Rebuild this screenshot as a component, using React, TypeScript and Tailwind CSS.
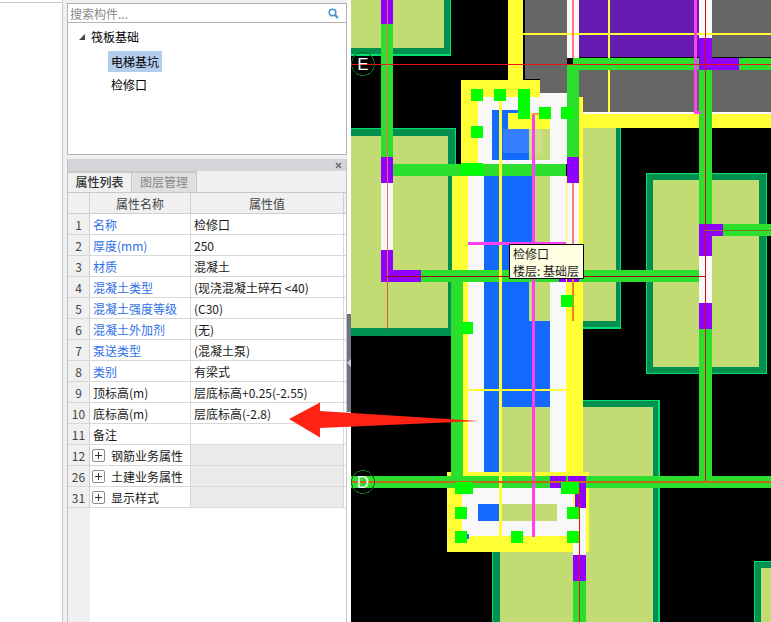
const rows = [
  { n: '1', name: '名称', value: '检修口', link: true },
  { n: '2', name: '厚度(mm)', value: '250', link: true },
  { n: '3', name: '材质', value: '混凝土', link: true },
  { n: '4', name: '混凝土类型', value: '(现浇混凝土碎石 <40)', link: true },
  { n: '5', name: '混凝土强度等级', value: '(C30)', link: true },
  { n: '6', name: '混凝土外加剂', value: '(无)', link: true },
  { n: '7', name: '泵送类型', value: '(混凝土泵)', link: true },
  { n: '8', name: '类别', value: '有梁式', link: true },
  { n: '9', name: '顶标高(m)', value: '层底标高+0.25(-2.55)', link: false },
  { n: '10', name: '底标高(m)', value: '层底标高(-2.8)', link: false },
  { n: '11', name: '备注', value: '', link: false },
];

const groups = [
  { n: '12', name: '钢筋业务属性' },
  { n: '26', name: '土建业务属性' },
  { n: '31', name: '显示样式' },
];

const KHAKI = '#c3db73';
const DARK = '#009050';
const EDGE = '#00e070';
const GREEN = '#2ddf2d';
const PURPLE = '#9000ff';
const YELLOW = '#ffff33';
const WHITE = '#f8f8f8';
const BLUE = '#1469ff';
const GRAY = '#666666';
const HANDLE = '#00ff00';
const RED = '#ee1111';
const PINK = '#ff40f0';

// x, y, w, h, fill
const shapes: [number, number, number, number, string][] = [
  // top left footing
  [351, 0, 100, 56, EDGE],
  [351, 0, 99, 54, DARK],
  [351, 0, 93, 48, KHAKI],
  // left footing
  [351, 128, 105, 208, EDGE],
  [351, 129, 104, 207, DARK],
  [351, 136, 97, 192, KHAKI],
  // right middle footing
  [583, 128, 38, 201, EDGE],
  [583, 128, 37, 199, DARK],
  [583, 128, 33, 193, KHAKI],
  // far right footing
  [646, 173, 121, 201, EDGE],
  [647, 174, 119, 199, DARK],
  [653, 180, 106, 187, KHAKI],
  // bottom footing
  [492, 400, 168, 222, EDGE],
  [493, 401, 165, 221, DARK],
  [500, 407, 153, 215, KHAKI],
  [754, 561, 17, 61, EDGE],
  [755, 562, 16, 60, DARK],
  [761, 568, 10, 54, KHAKI],
  // top right block
  [525, 0, 42, 79, GRAY],
  [540, 79, 27, 14, GRAY],
  [579, 0, 120, 57, '#661cb0'],
  [712, 0, 59, 57, GRAY],
  [579, 70, 120, 43, GRAY],
  [712, 70, 59, 43, GRAY],
  [567, 0, 12, 58, WHITE],
  [699, 0, 13, 38, WHITE],
  [579, 112, 192, 2, WHITE],
  [508, 0, 15, 81, YELLOW],
  [523, 33, 248, 2, YELLOW],
  [608, 0, 2, 112, YELLOW],
  [579, 114, 192, 14, YELLOW],
  // core of the pit
  [461, 80, 79, 17, YELLOW],
  [461, 97, 16, 67, YELLOW],
  [477, 97, 90, 67, WHITE],
  [540, 93, 27, 4, WHITE],
  [492, 110, 37, 50, BLUE],
  [529, 129, 21, 31, KHAKI],
  [508, 113, 42, 16, YELLOW],
  [503, 129, 40, 24, 'rgba(255,255,255,0.14)'],
  [579, 97, 4, 17, YELLOW],
  [567, 114, 16, 362, YELLOW],
  [452, 176, 16, 106, YELLOW],
  [463, 282, 5, 194, YELLOW],
  [468, 176, 16, 296, WHITE],
  [484, 176, 15, 296, BLUE],
  [499, 176, 36, 231, BLUE],
  [535, 176, 15, 231, BLUE],
  [535, 176, 15, 94, KHAKI],
  [529, 282, 21, 39, KHAKI],
  [502, 407, 48, 65, KHAKI],
  [550, 176, 16, 296, WHITE],
  [567, 176, 12, 94, WHITE],
  // bottom pad
  [447, 472, 142, 80, YELLOW],
  [462, 488, 111, 48, WHITE],
  [478, 504, 21, 17, BLUE],
  [502, 504, 55, 17, KHAKI],
  [463, 534, 6, 5, BLUE],
  // beams
  [381, 0, 12, 24, PURPLE],
  [381, 24, 12, 133, GREEN],
  [381, 157, 12, 26, PURPLE],
  [381, 183, 12, 67, WHITE],
  [381, 250, 12, 32, PURPLE],
  [381, 270, 40, 12, PURPLE],
  [421, 270, 284, 12, GREEN],
  [393, 164, 173, 12, GREEN],
  [451, 282, 12, 194, GREEN],
  [573, 58, 126, 12, GREEN],
  [567, 65, 12, 92, GREEN],
  [567, 157, 12, 26, PURPLE],
  [699, 38, 13, 32, PURPLE],
  [699, 58, 40, 12, PURPLE],
  [739, 58, 32, 12, GREEN],
  [699, 70, 13, 154, GREEN],
  [699, 224, 13, 32, PURPLE],
  [699, 224, 24, 12, PURPLE],
  [723, 224, 48, 12, GREEN],
  [699, 256, 13, 47, WHITE],
  [699, 303, 13, 26, PURPLE],
  [699, 329, 13, 150, GREEN],
  [351, 476, 420, 12, GREEN],
  [550, 476, 16, 12, PURPLE],
  [568, 476, 18, 12, PURPLE],
  [575, 488, 11, 20, PURPLE],
  [573, 508, 13, 47, WHITE],
  [573, 555, 13, 26, PURPLE],
  [573, 581, 13, 41, GREEN],
  [559, 278, 20, 4, PURPLE],
  // thin lines
  [499, 97, 3, 440, YELLOW],
  [468, 389, 98, 2, YELLOW],
  [476, 101, 2, 63, YELLOW],
  [566, 176, 1, 296, YELLOW],
  [532, 113, 3, 424, PINK],
  [468, 242, 98, 3, PINK],
  [532, 113, 8, 2, '#ffa040'],
  [694, 0, 3, 112, PINK],
  [694, 111, 7, 3, PINK],
  [351, 64, 420, 1, RED],
  [387, 0, 1, 276, '#ff6060'],
  [387, 276, 1, 53, '#e85a20'],
  [572, 0, 2, 58, '#ff7a7a'],
  [572, 183, 2, 97, '#ff7a7a'],
  [572, 280, 2, 41, '#f08020'],
  [705, 0, 1, 481, '#d81010'],
  [387, 276, 318, 1, '#a80000'],
  [705, 230, 66, 1, '#7d7a20'],
  [351, 481, 420, 2, '#c06a18'],
  [579, 488, 1, 134, RED],
];

// selection grips
const grips: [number, number, number, number][] = [
  [471, 89, 12, 12],
  [494, 89, 12, 12],
  [518, 89, 12, 30],
  [539, 107, 12, 12],
  [561, 107, 12, 12],
  [471, 126, 12, 12],
  [461, 163, 22, 12],
  [461, 322, 12, 12],
  [561, 295, 12, 12],
  [455, 482, 18, 12],
  [455, 507, 12, 12],
  [455, 531, 12, 12],
  [511, 531, 12, 12],
  [567, 531, 12, 12],
  [567, 507, 12, 12],
  [561, 482, 18, 12],
];

const AxisMark = ({ y, label }: { y: number; label: string }) => (
  <g>
    <circle cx={363} cy={y} r={11.5} fill="none" stroke="#0a6a1a" strokeWidth={1} />
    <text x={363} y={y + 6} textAnchor="middle" fill="#ffffff" fontSize={17} fontFamily="'Liberation Sans', sans-serif">
      {label}
    </text>
  </g>
);

const Drawing = () => (
  <svg className="block w-[420px] h-[622px]" viewBox="351 0 420 622" shapeRendering="crispEdges">
    <rect x={351} y={0} width={420} height={622} fill="#000000" />
    {shapes.map(([x, y, w, h, fill], i) => (
      <rect key={i} x={x} y={y} width={w} height={h} fill={fill} />
    ))}
    {grips.map(([x, y, w, h], i) => (
      <rect key={i} x={x} y={y} width={w} height={h} fill={HANDLE} />
    ))}
    <AxisMark y={64} label="E" />
    <AxisMark y={482} label="D" />
  </svg>
);

const cjk = "font-['Noto_Sans_CJK_SC','Liberation_Sans',sans-serif]";

export default function App() {
  return (
    <div className={`relative flex w-[771px] h-[622px] overflow-hidden bg-white text-[12px] text-[#1a1a1a] ${cjk}`}>
      {/* left blank tree column */}
      <div className="w-[63px] shrink-0 border-r border-[#c8c8c8] pt-[2px]">
        <div className="h-px bg-[#c8c8c8]" />
      </div>

      <div className="w-[284px] shrink-0 flex flex-col bg-[#f0f0f0] pl-[4px]">
        {/* component list */}
        <div className="h-[155px] shrink-0 flex flex-col pt-[3px]">
          <div className="flex-1 flex flex-col border border-[#b4b4b4] bg-white">
            <div className="h-[19px] shrink-0 flex items-center justify-between border-b border-[#b4b4b4] pl-[2px] pr-[7px]">
              <span className="text-[#8a8a8a] pt-[2px]">搜索构件...</span>
              <svg width="11" height="11" viewBox="0 0 11 11" fill="none">
                <circle cx="4.5" cy="4.5" r="3.3" stroke="#3f93d2" strokeWidth="1.6" />
                <path d="M7 7l3 3" stroke="#3f93d2" strokeWidth="2" />
              </svg>
            </div>
            <div className="flex-1 pt-[2px]">
              <div className="flex items-center h-[24px] pl-[10px]">
                <svg width="8" height="8" viewBox="0 0 8 8" className="mr-[5px]">
                  <path d="M7 1v6H1z" fill="#444444" />
                </svg>
                <span className="text-[#000000]">筏板基础</span>
              </div>
              <div className="flex items-center h-[24px] pl-[40px]">
                <span className="px-[3px] h-[21px] leading-[21px] bg-[#b3cdec] text-[#000000]">电梯基坑</span>
              </div>
              <div className="flex items-center h-[24px] pl-[43px]">
                <span className="text-[#000000]">检修口</span>
              </div>
            </div>
          </div>
        </div>

        {/* property panel */}
        <div className="mt-[4px] flex-1 flex flex-col border-x border-[#c4c4c4] bg-white">
          <div className="h-[12px] shrink-0 flex items-center justify-end bg-[#d3d5da] pr-[4px]">
            <svg width="7" height="7" viewBox="0 0 7 7">
              <path d="M1 1l5 5M6 1L1 6" stroke="#666666" strokeWidth="1.4" />
            </svg>
          </div>
          <div className="h-[22px] shrink-0 flex bg-[#f0f0f0] border-b border-[#c8c8c8]">
            <div className="w-[64px] flex items-center justify-center border-t-2 border-[#c8c8c8] border-r font-medium text-[#333333] pb-[2px]">
              属性列表
            </div>
            <div className="w-[65px] flex items-center justify-center border-t-2 border-[#c8c8c8] border-r bg-[#dfdfdf] text-[#888888] pb-[2px]">
              图层管理
            </div>
          </div>

          <div className="flex-1 relative bg-white">
            <div className="absolute top-0 bottom-0 left-0 w-[22px] bg-[#f0f0f0]" />
            <div className="relative">
              <div className="flex h-[21px] bg-[#f0f0f0] border-b border-[#cfcfcf] text-[#444444]">
                <div className="w-[22px] border-r border-[#cfcfcf]" />
                <div className="w-[101px] border-r border-[#cfcfcf] text-center leading-[22px]">属性名称</div>
                <div className="w-[153px] border-r border-[#cfcfcf] text-center leading-[22px]">属性值</div>
              </div>
              {rows.map((r) => (
                <div key={r.n} className="flex h-[21px] border-b border-[#d8d8d8]">
                  <div className="w-[22px] border-r border-[#cfcfcf] bg-[#f0f0f0] text-center leading-[22px] text-[#444444]">
                    {r.n}
                  </div>
                  <div className={`w-[101px] border-r border-[#d8d8d8] pl-[3px] leading-[22px] ${r.link ? 'text-[#2f6fe8]' : 'text-[#1a1a1a]'}`}>
                    {r.name}
                  </div>
                  <div className="w-[153px] border-r border-[#d8d8d8] pl-[3px] leading-[22px] whitespace-nowrap">{r.value}</div>
                </div>
              ))}
              {groups.map((g) => (
                <div key={g.n} className="flex h-[21px] border-b border-[#d8d8d8]">
                  <div className="w-[22px] border-r border-[#cfcfcf] bg-[#f0f0f0] text-center leading-[22px] text-[#444444]">
                    {g.n}
                  </div>
                  <div className="w-[101px] flex items-center border-r border-[#d8d8d8] pl-[2px]">
                    <span className="w-[13px] h-[13px] mr-[6px] flex items-center justify-center border border-[#8c8c8c] rounded-[2px]">
                      <svg width="7" height="7" viewBox="0 0 7 7">
                        <path d="M3.5 0v7M0 3.5h7" stroke="#333333" strokeWidth="1" />
                      </svg>
                    </span>
                    <span className="whitespace-nowrap pt-[1px]">{g.name}</span>
                  </div>
                  <div className="w-[153px] border-r border-[#d8d8d8] bg-[#ebebeb]" />
                </div>
              ))}
            </div>
          </div>
        </div>
      </div>

      {/* splitter */}
      <div className="w-[4px] shrink-0 flex flex-col bg-white">
        <div className="h-[314px]" />
        <div className="h-[98px] bg-[#6d7680] flex items-center">
          <svg width="4" height="8" viewBox="0 0 4 8">
            <path d="M4 0v8L0 4z" fill="#c9cdd2" />
          </svg>
        </div>
      </div>

      <Drawing />

      {/* hover tooltip */}
      <div className="absolute left-[509px] top-[244px] w-[75px] h-[35px] border border-black bg-[#ffffe1] pl-[3px] text-[12px] leading-[17px] text-[#1a1a1a] whitespace-nowrap">
        <div>检修口</div>
        <div>楼层: 基础层</div>
      </div>

      {/* annotation arrow */}
      <svg className="absolute left-0 top-0 w-[771px] h-[622px] pointer-events-none" viewBox="0 0 771 622">
        <path d="M289 419L320 402.500V411L479 421L320 428V437.500Z" fill="#ff2215" />
      </svg>
    </div>
  );
}
